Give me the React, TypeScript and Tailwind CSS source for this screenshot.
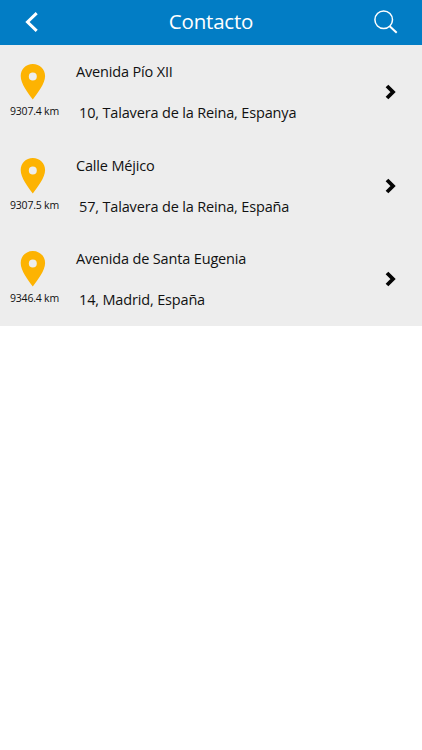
import React, { FC } from "react";

const locations = [
  {
    street: "Avenida Pío XII",
    address: "10, Talavera de la Reina, Espanya",
    distance: "9307.4 km",
  },
  {
    street: "Calle Méjico",
    address: "57, Talavera de la Reina, España",
    distance: "9307.5 km",
  },
  {
    street: "Avenida de Santa Eugenia",
    address: "14, Madrid, España",
    distance: "9346.4 km",
  },
];

const Pin: FC = () => (
  <svg width="26" height="37" viewBox="0 0 26 37" className="ml-5 block">
    <path
      d="M12.800.9C5.900.9.700 6.300.700 12.900c0 8 7.400 16.800 12.100 23.700 4.700-6.900 12.300-15.700 12.300-23.700C25.100 6.300 19.800.9 12.800.9Zm0 8.700a4 4 0 1 1 0 8 4 4 0 0 1 0-8Z"
      fill="#fdb302"
      fillRule="evenodd"
    />
  </svg>
);

const App: FC = () => {
  return (
    <main className="min-h-[750px] bg-white font-['Open_Sans','Noto_Sans',sans-serif] text-[#111111]">
      <header className="flex h-[45px] items-center bg-[#027dc5] pb-px text-white">
        <button aria-label="Volver" className="w-16 pl-[25px]">
          <svg width="14" height="20" viewBox="0 0 14 20" fill="none">
            <path d="M11.700 1.200 2.500 10l9.200 8.800" stroke="currentColor" strokeWidth="3" />
          </svg>
        </button>
        <h1 className="flex-1 pb-px text-center text-[20.500px] leading-none tracking-[-0.2px]">
          Contacto
        </h1>
        <button aria-label="Buscar" className="w-16 pl-4">
          <svg width="24" height="24" viewBox="0 0 24 24" fill="none">
            <circle cx="9.700" cy="9.700" r="8.800" stroke="currentColor" strokeWidth="1.500" />
            <path d="m15.700 16.200 7 6.500" stroke="currentColor" strokeWidth="2" />
          </svg>
        </button>
      </header>

      <ul className="h-[281px] bg-[#ededed]">
        {locations.map(({ street, address, distance }) => (
          <li key={street} className="flex h-[93.670px]">
            <div className="w-[76px] pt-[18px]">
              <Pin />
              <p className="mt-1 pl-[10px] text-[10.500px] leading-[14px] tracking-[-0.2px]">
                {distance}
              </p>
            </div>
            <div className="flex-1 text-[14.500px] leading-5 tracking-[-0.160px]">
              <p className="pt-[17px]">{street}</p>
              <p className="pl-[3px] pt-[21px]">{address}</p>
            </div>
            <div className="w-[37px] pt-[39px]">
              <svg width="12" height="16" viewBox="0 0 12 16" fill="none">
                <path d="M2 2 8 8l-6 6" stroke="#050505" strokeWidth="3.800" />
              </svg>
            </div>
          </li>
        ))}
      </ul>
    </main>
  );
};

export default App;
